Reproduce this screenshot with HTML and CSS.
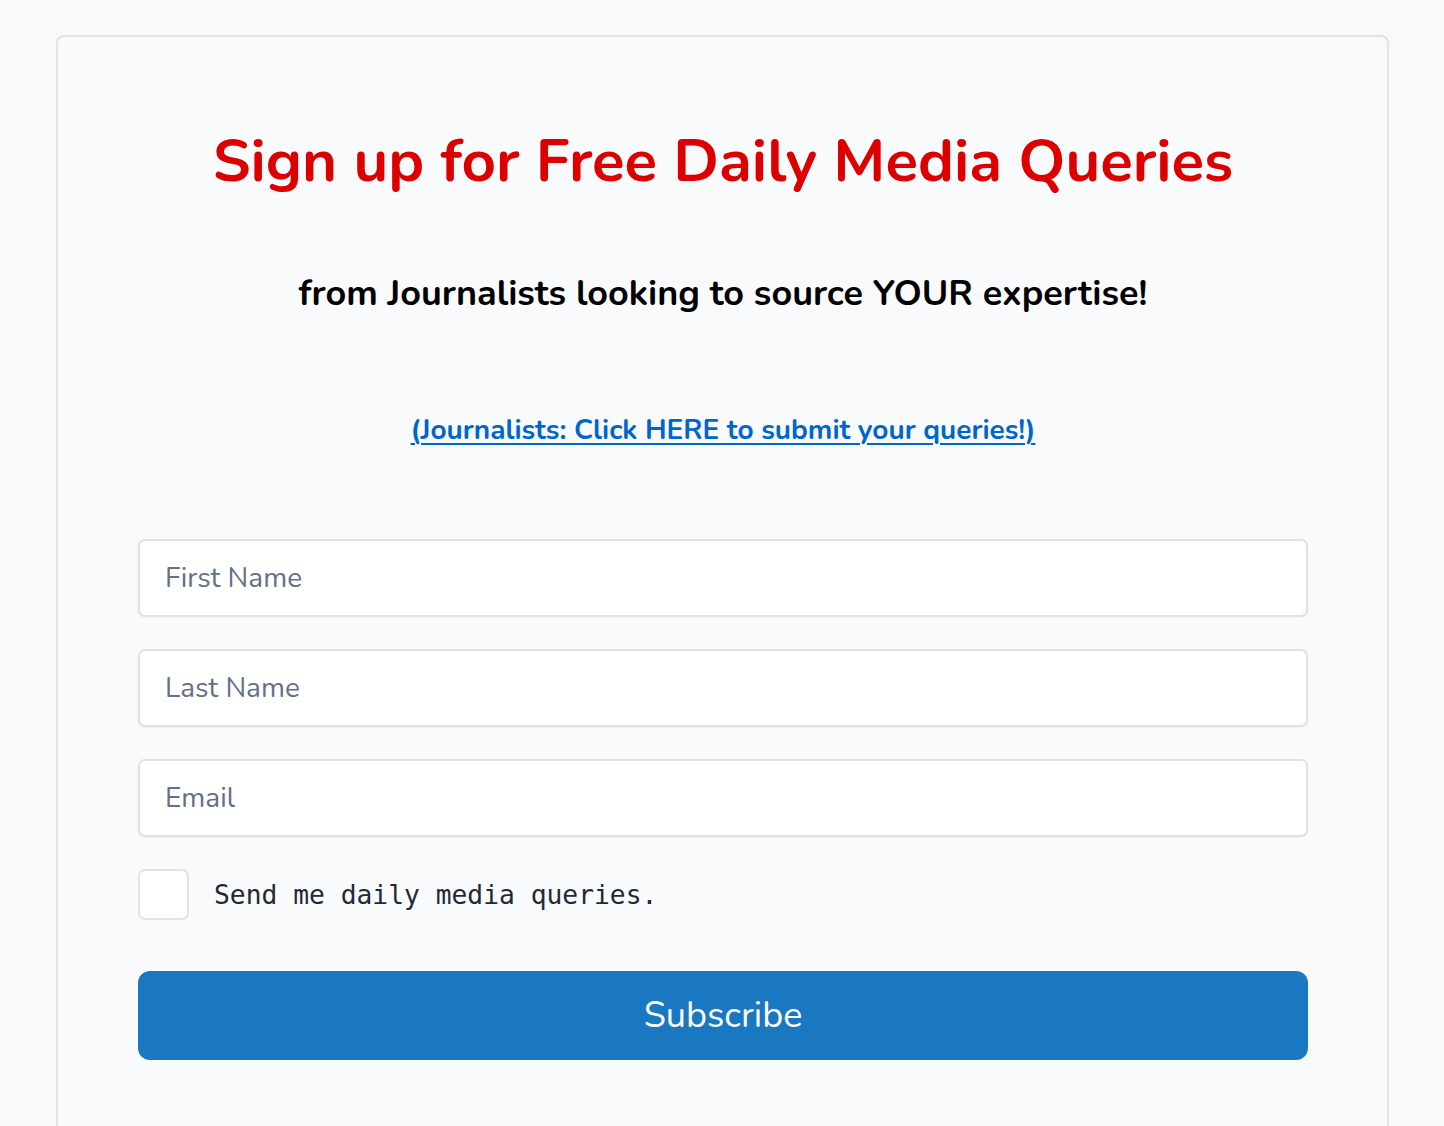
FILE: index.html
```html
<!DOCTYPE html>
<html lang="en">
<head>
<meta charset="utf-8">
<title>Sign up for Free Daily Media Queries</title>
<link rel="stylesheet" href="styles.css">
</head>
<body>
<main class="card">
  <h1 class="title">Sign up for Free Daily Media Queries</h1>
  <p class="subtitle">from Journalists looking to source YOUR expertise!</p>
  <p class="journalists"><a href="#" class="journalists-link">(Journalists: Click HERE to submit your queries!)</a></p>
  <form class="form">
    <input class="field" type="text" placeholder="First Name">
    <input class="field" type="text" placeholder="Last Name">
    <input class="field" type="email" placeholder="Email">
    <label class="consent">
      <span class="checkbox"></span>
      <span class="consent-text">Send me daily media queries.</span>
    </label>
    <button class="submit" type="button">Subscribe</button>
  </form>
</main>
</body>
</html>
```

FILE: styles.css
```css
* { box-sizing: border-box; }
html, body { margin: 0; padding: 0; }
body {
  background: #f9f9f9;
  font-family: "Nunito", "Open Sans", "Noto Sans", sans-serif;
  padding: 35px 55px 0 56px;
}
.card {
  background: #f9fafb;
  border: 2px solid #e3e3e3;
  border-bottom: none;
  border-radius: 8px 8px 0 0;
  padding: 86px 79px 60px 80px;
  min-height: 1100px;
}
.title {
  margin: 0;
  text-align: center;
  color: #dd0000;
  font-size: 60px;
  font-weight: 700;
  line-height: 76px;
}
.subtitle {
  margin: 71px 0 0;
  text-align: center;
  color: #000;
  font-size: 36px;
  font-weight: 700;
  line-height: 48px;
}
.journalists {
  margin: 93px 0 0;
  text-align: center;
  font-size: 28px;
  line-height: 38px;
  font-weight: 700;
}
.journalists-link {
  color: #0066cc;
  text-decoration: underline;
  text-decoration-thickness: 2px;
  text-underline-offset: 4px;
}
.form {
  margin-top: 90px;
  display: flex;
  flex-direction: column;
  gap: 32px;
}
.field {
  width: 100%;
  height: 78px;
  border: 2px solid #e1e1e1;
  border-radius: 7px;
  background: #fff;
  padding: 0 25px;
  font-family: inherit;
  font-size: 28px;
  color: #333;
  box-shadow: 0 1px 2px rgba(0,0,0,0.04);
}
.field::placeholder { color: #64708a; }
.consent {
  display: flex;
  align-items: center;
  gap: 25px;
}
.checkbox {
  width: 51px;
  height: 51px;
  background: #fff;
  border: 2px solid #e3e3e3;
  border-radius: 7px;
  flex: none;
}
.consent-text {
  font-family: "DejaVu Sans Mono", "Liberation Mono", monospace;
  font-size: 26.3px;
  color: #1f2937;
}
.submit {
  margin-top: 19px;
  height: 89px;
  width: 100%;
  border: none;
  border-radius: 12px;
  background: #1a78c2;
  color: #fff;
  font-family: inherit;
  font-size: 36px;
  font-weight: 400;
}
```
